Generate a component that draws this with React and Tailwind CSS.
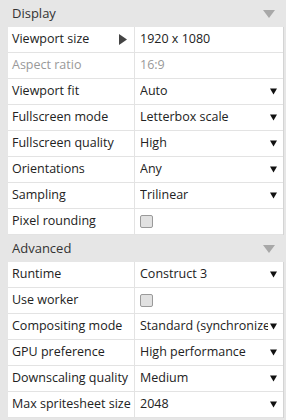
import React from 'react';

const display = [
    { label: 'Viewport size', value: '1920 x 1080', type: 'expand' },
    { label: 'Aspect ratio', value: '16:9', type: 'readonly' },
    { label: 'Viewport fit', value: 'Auto', type: 'select' },
    { label: 'Fullscreen mode', value: 'Letterbox scale', type: 'select' },
    { label: 'Fullscreen quality', value: 'High', type: 'select' },
    { label: 'Orientations', value: 'Any', type: 'select' },
    { label: 'Sampling', value: 'Trilinear', type: 'select' },
    { label: 'Pixel rounding', type: 'check' },
];

const advanced = [
    { label: 'Runtime', value: 'Construct 3', type: 'select' },
    { label: 'Use worker', type: 'check' },
    { label: 'Compositing mode', value: 'Standard (synchronized)', type: 'select' },
    { label: 'GPU preference', value: 'High performance', type: 'select' },
    { label: 'Downscaling quality', value: 'Medium', type: 'select' },
    { label: 'Max spritesheet size', value: '2048', type: 'select' },
];

function SectionHeader({ title }) {
    return (
        <div className="h-[27px] flex items-center justify-between pl-3 pr-[11px] text-[13px] text-[#333]">
            <span>{title}</span>
            {/* collapse arrow */}
            <svg width="12" height="8" viewBox="0 0 12 8">
                <path d="M0 0 L12 0 L6 8 Z" fill="#a8a8a8" />
            </svg>
        </div>
    );
}

function Row({ row }) {
    const readonly = row.type === 'readonly';
    return (
        <div className="grid grid-cols-[127px_1fr] h-[26px] border-b border-[#e3e3e3]">
            <div
                className={`flex items-center justify-between pl-1 pr-[7px] border-r border-[#e3e3e3] ${
                    readonly ? 'text-[#999]' : 'text-[#222]'
                }`}
            >
                <span className="whitespace-nowrap">{row.label}</span>
                {row.type === 'expand' && (
                    <svg width="8" height="11" viewBox="0 0 8 11">
                        <path d="M0 0 L8 5.5 L0 11 Z" fill="#444" />
                    </svg>
                )}
            </div>
            <div className="flex items-center pl-[5px] pr-[6px] overflow-hidden">
                {row.type === 'check' ? (
                    <div className="w-[13px] h-[13px] rounded-[2px] border border-[#9a9a9a] bg-[#e1e1e1]" />
                ) : (
                    <>
                        <span
                            className={`flex-1 min-w-0 whitespace-nowrap overflow-hidden ${
                                readonly ? 'text-[#999]' : 'text-[#222]'
                            }`}
                        >
                            {row.value}
                        </span>
                        {row.type === 'select' && (
                            <svg width="7" height="7" viewBox="0 0 7 7" className="shrink-0 ml-[2px]">
                                <path d="M0 0.5 L7 0.5 L3.5 6.5 Z" fill="#111" />
                            </svg>
                        )}
                    </>
                )}
            </div>
        </div>
    );
}

export default function App() {
    return (
        <div
            className="w-[286px] h-[420px] bg-[#e6e6e6] overflow-hidden text-[12.5px]"
            style={{ fontFamily: '"Open Sans", "Noto Sans", sans-serif' }}
        >
            <SectionHeader title="Display" />
            <div className="ml-2 mr-[2px] bg-white border-r border-[#d4d4d4]">
                {display.map((row) => (
                    <Row key={row.label} row={row} />
                ))}
            </div>
            <SectionHeader title="Advanced" />
            <div className="ml-2 mr-[2px] bg-white border-r border-[#d4d4d4]">
                {advanced.map((row) => (
                    <Row key={row.label} row={row} />
                ))}
            </div>
        </div>
    );
}
